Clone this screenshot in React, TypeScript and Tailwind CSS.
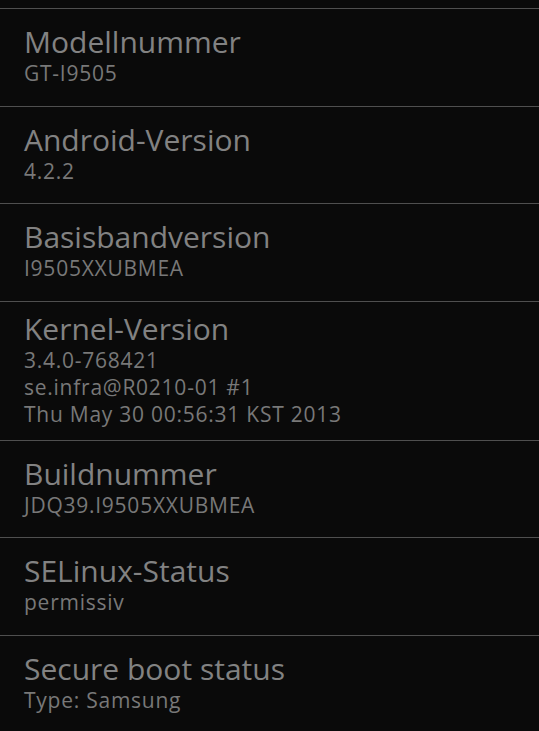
const rows: { title: string; lines: string[]; pad: string }[] = [
  { title: "Modellnummer", lines: ["GT-I9505"], pad: "pt-[15px] pb-[19px]" },
  { title: "Android-Version", lines: ["4.2.2"], pad: "pt-[15px] pb-[18px]" },
  { title: "Basisbandversion", lines: ["I9505XXUBMEA"], pad: "pt-[15px] pb-[19px]" },
  {
    title: "Kernel-Version",
    lines: ["3.4.0-768421", "se.infra@R0210-01 #1", "Thu May 30 00:56:31 KST 2013"],
    pad: "pt-[9px] pb-[12px]",
  },
  { title: "Buildnummer", lines: ["JDQ39.I9505XXUBMEA"], pad: "pt-[15px] pb-[18px]" },
  { title: "SELinux-Status", lines: ["permissiv"], pad: "pt-[15px] pb-[19px]" },
  { title: "Secure boot status", lines: ["Type: Samsung"], pad: "pt-[15px] pb-[19px]" },
];

export default function App() {
  return (
    <div
      className="w-[539px] h-[731px] overflow-hidden bg-[#0a0a0a] pt-[8px]"
      style={{ fontFamily: '"Open Sans", "Noto Sans", sans-serif' }}
    >
      {rows.map((row) => (
        <div key={row.title} className={`border-t border-[#4f4f4f] px-[24px] ${row.pad}`}>
          <div className="text-[30px] leading-[36px] text-[#828282] whitespace-nowrap">
            {row.title}
          </div>
          {row.lines.map((line) => (
            <div
              key={line}
              className="text-[21px] leading-[27px] tracking-[0.75px] text-[#787878] whitespace-nowrap"
            >
              {line}
            </div>
          ))}
        </div>
      ))}
    </div>
  );
}
